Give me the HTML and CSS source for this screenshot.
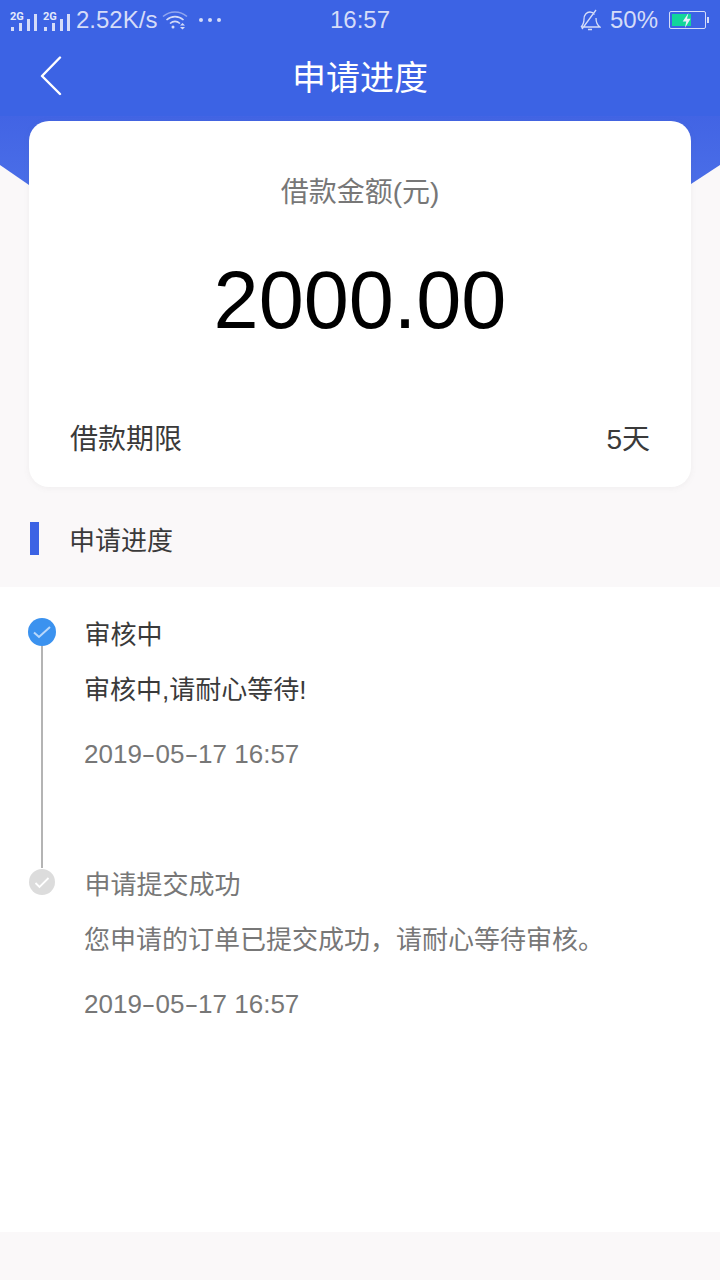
FILE: index.html
```html
<!DOCTYPE html>
<html lang="zh">
<head>
<meta charset="utf-8">
<title>申请进度</title>
<link rel="stylesheet" href="styles.css">
</head>
<body>
<header class="top">
  <div class="status">
    <div class="status-left">
      <span class="signal"><i class="tag">2G</i>
        <svg width="27" height="20" viewBox="0 0 27 20"><path fill="#d5dcf8" d="M1 15h3v4H1zM9 11h3v8H9zM17 7h3v12h-3zM24 2h3v17h-3z"/></svg></span>
      <span class="signal"><i class="tag">2G</i>
        <svg width="27" height="20" viewBox="0 0 27 20"><path fill="#d5dcf8" d="M1 15h3v4H1zM9 11h3v8H9zM17 7h3v12h-3zM24 2h3v17h-3z"/></svg></span>
      <span class="speed">2.52K/s</span>
      <svg class="wifi" width="26" height="20" viewBox="0 0 26 20" fill="none" stroke="#d5dcf8" stroke-width="1.6"><path d="M1 6.500C8 .5 18 .5 25 6.500" opacity=".55"/><path d="M4.500 10C9.500 5.500 16.500 5.500 21.500 10"/><path d="M8 13.500C11 11 15 11 18 13.500"/><circle cx="11" cy="17" r="1.500" fill="#d5dcf8" stroke="none"/><path d="M18 15.500l2.500-2.500 2.500 2.500zM18 17h5l-2.500 2.500z" fill="#d5dcf8" stroke="none"/></svg>
      <span class="dots"><b></b><b></b><b></b></span>
    </div>
    <div class="clock">16:57</div>
    <div class="status-right">
      <svg width="22" height="24" viewBox="0 0 22 24" fill="none" stroke="#d5dcf8" stroke-width="1.3"><path d="M2 19c2-2 3-4 3-8 0-4 2.500-7 6-7 2 0 3.500 1 4.500 2.500M17 10c0 4 1 7 4 9H2M9 21.500h4M3 21L17 2"/></svg>
      <span class="pct">50%</span>
      <span class="battery"><span class="level"></span>
        <svg class="bolt" width="10" height="15" viewBox="0 0 14 16" preserveAspectRatio="none"><path fill="#e9eefc" d="M9 0L1 9h5l-2 7 8-10H7z"/></svg>
      </span>
      <span class="cap"></span>
    </div>
  </div>
  <nav class="nav">
    <svg class="back" width="24" height="40" viewBox="0 0 24 40" fill="none" stroke="#fff" stroke-width="2.400" stroke-linecap="round" stroke-linejoin="round"><path d="M20 1.500L2 20l18 18"/></svg>
    <h1 class="title">申请进度</h1>
  </nav>
</header>

<main class="main">
  <svg class="arc" width="720" height="70" viewBox="0 0 720 70" preserveAspectRatio="none">
    <defs><linearGradient id="g" x1="0" y1="0" x2="0" y2="1"><stop offset="0" stop-color="#4264e4"/><stop offset="1" stop-color="#4b6fe8"/></linearGradient></defs>
    <path fill="url(#g)" d="M0 0H720V49L691 68Q360 88 29 69L0 49Z"/>
  </svg>

  <section class="card">
    <p class="label">借款金额(元)</p>
    <p class="amount">2000.00</p>
    <div class="term"><span>借款期限</span><span>5天</span></div>
  </section>

  <h2 class="section"><span class="mark"></span>申请进度</h2>

  <section class="progress">
    <article class="step active">
      <div class="rail">
        <span class="dot"><svg width="20" height="16" viewBox="0 0 20 16" fill="none" stroke="#b9d8fb" stroke-width="2"><path d="M2 8.500l5 4.500L18 3"/></svg></span>
        <span class="line"></span>
      </div>
      <div class="info">
        <h3 class="step-title">审核中</h3>
        <p class="step-text">审核中,请耐心等待!</p>
        <p class="step-date">2019<span class="dash">-</span>05<span class="dash">-</span>17 16:57</p>
      </div>
    </article>
    <article class="step done">
      <div class="rail">
        <span class="dot"><svg width="16" height="13" viewBox="0 0 16 13" fill="none" stroke="#fff" stroke-width="1.800"><path d="M1.500 7l4 4L14.500 2"/></svg></span>
      </div>
      <div class="info">
        <h3 class="step-title">申请提交成功</h3>
        <p class="step-text">您申请的订单已提交成功，请耐心等待审核。</p>
        <p class="step-date">2019<span class="dash">-</span>05<span class="dash">-</span>17 16:57</p>
      </div>
    </article>
  </section>
</main>
</body>
</html>
```
FILE: styles.css
```css
* { box-sizing: border-box; }
html, body { margin: 0; padding: 0; }
body {
  width: 720px;
  height: 1280px;
  overflow: hidden;
  background: #faf8f9;
  font-family: "Liberation Sans", "Noto Sans CJK SC", sans-serif;
  color: #3a3a3a;
}
h1, h2, h3, p { margin: 0; font-weight: 400; }

.top { background: #3c63e4; height: 116px; }
.status {
  height: 40px;
  display: grid;
  grid-template-columns: 1fr auto 1fr;
  align-items: center;
  color: #d5dcf8;
}
.status-left { display: flex; align-items: center; padding-left: 10px; }
.signal { position: relative; display: block; width: 33px; height: 24px; padding-top: 4px; }
.signal svg { display: block; }
.tag {
  position: absolute; left: 0; top: 3px;
  font: 700 11px/12px Roboto, sans-serif; color: #e4e9fb;
}
.speed { font-size: 24px; line-height: 40px; }
.wifi { margin-left: 5px; }
.dots { display: flex; gap: 5px; margin-left: 11px; }
.dots b { width: 4px; height: 4px; border-radius: 50%; background: #d5dcf8; }
.clock { font-size: 24px; line-height: 40px; }
.status-right { display: flex; align-items: center; justify-content: flex-end; padding-right: 11px; }
.pct { font-size: 24px; line-height: 40px; margin: 0 11px 0 9px; }
.battery {
  position: relative; display: block;
  width: 37px; height: 18px;
  border: 1px solid #d5dcf8; border-radius: 2px; padding: 2px;
}
.level { display: block; width: 19px; height: 12px; background: #12d69a; }
.bolt { position: absolute; left: 12px; top: 1px; }
.cap { display: block; width: 2px; height: 6px; margin-left: 1px; background: #d5dcf8; }

.nav { position: relative; height: 76px; display: flex; align-items: center; justify-content: center; }
.back { position: absolute; left: 40px; top: 16px; }
.title { font-size: 34px; line-height: 76px; color: #fff; }

.main { position: relative; padding-top: 5px; }
.arc { position: absolute; left: 0; top: 0; display: block; }

.card {
  position: relative;
  margin: 0 29px;
  height: 366px;
  background: #fff;
  border-radius: 20px;
  box-shadow: 0 1px 6px rgba(120, 110, 110, .08);
  padding: 0 41px;
  display: flex;
  flex-direction: column;
}
.label { margin-top: 52px; text-align: center; font-size: 28px; line-height: 40px; color: #777; }
.amount { margin-top: 38px; text-align: center; font-size: 81px; line-height: 98px; color: #000; }
.term {
  margin-top: 71px;
  display: flex; justify-content: space-between;
  font-size: 28px; line-height: 40px;
}

.section {
  position: relative;
  height: 100px;
  padding: 2px 0 0 69px;
  display: flex; align-items: center;
  font-size: 26px;
}
.mark { position: absolute; left: 30px; top: 35px; width: 9px; height: 33px; background: #3c63e4; }

.progress { background: #fff; height: 645px; padding: 31px 0 0 28px; }
.step { display: flex; height: 250px; }
.rail { position: relative; width: 28px; flex: none; display: flex; flex-direction: column; align-items: center; }
.dot { flex: none; display: flex; align-items: center; justify-content: center; border-radius: 50%; }
.active .dot { width: 28px; height: 28px; background: #3b92ef; }
.done .dot { width: 26px; height: 26px; margin-top: 1px; background: #dcdcdc; }
.line { flex: none; width: 2px; height: 222px; background: #b4b4b4; }
.info { margin-left: 28px; padding-top: 1px; }
.step-title { font-size: 26px; line-height: 34px; margin: -1px 0 0 0.500px; }
.step-text { font-size: 26px; line-height: 36px; margin-top: 20px; }
.step-date { font-size: 26px; line-height: 36px; margin-top: 28px; color: #777; }
.dash { display: inline-block; margin: 0 2.500px; transform: scaleX(1.600); }
.done .step-title, .done .step-text { color: #777; }
```
